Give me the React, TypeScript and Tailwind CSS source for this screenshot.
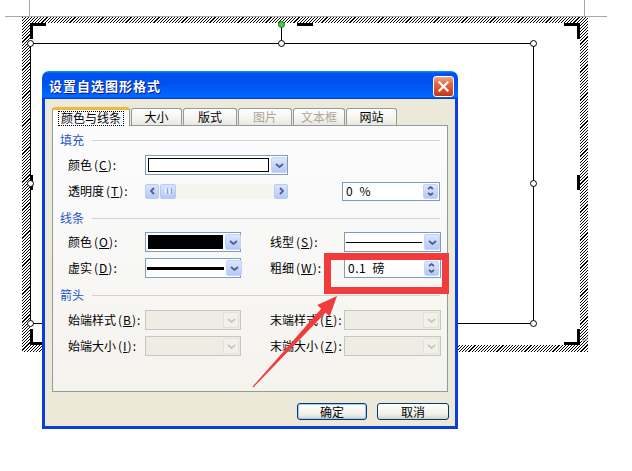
import React from 'react';

type Dir = 'up' | 'down' | 'left' | 'right';

function Chevron({ dir, color = '#4D6185', small }: { dir: Dir; color?: string; small?: boolean }) {
  if (dir === 'up' || dir === 'down') {
    const w = small ? 7 : 9;
    const h = small ? 4 : 5;
    const pts = dir === 'down' ? `1,1 ${w / 2},${h - 1} ${w - 1},1` : `1,${h - 1} ${w / 2},1 ${w - 1},${h - 1}`;
    return (
      <svg width={w} height={h} viewBox={`0 0 ${w} ${h}`}>
        <polyline points={pts} fill="none" stroke={color} strokeWidth={1.8} />
      </svg>
    );
  }
  const pts = dir === 'left' ? '4,1 1,4 4,7' : '1,1 4,4 1,7';
  return (
    <svg width={5} height={8} viewBox="0 0 5 8">
      <polyline points={pts} fill="none" stroke={color} strokeWidth={1.8} />
    </svg>
  );
}

const DropBtn = ({ disabled }: { disabled?: boolean }) => (
  <div
    className={`flex w-[16px] shrink-0 items-center justify-center rounded-[2px] border ${
      disabled
        ? 'border-[#E2E1D8] bg-[#F1F0EA]'
        : 'border-[#C3D3FD] bg-[linear-gradient(to_bottom,#DCE6FE,#B4C8F7)]'
    }`}
  >
    <Chevron dir="down" color={disabled ? '#C9C7BA' : '#4D6185'} />
  </div>
);

const Combo = ({ className, disabled, children }: { className: string; disabled?: boolean; children?: React.ReactNode }) => (
  <div
    className={`flex h-[20px] shrink-0 gap-[2px] border p-[1px] ${
      disabled ? 'border-[#C9C7BA] bg-[#EDECE5]' : 'border-[#7F9DB9] bg-white'
    } ${className}`}
  >
    <div className="flex flex-1 items-center">{children}</div>
    <DropBtn disabled={disabled} />
  </div>
);

const Spin = ({ className, children }: { className: string; children: React.ReactNode }) => (
  <div className={`flex h-[19px] shrink-0 border border-[#7F9DB9] bg-white p-[1px] ${className}`}>
    <div className="flex flex-1 items-center whitespace-pre pl-[2px] text-[12px] leading-none tracking-[0.5px]">{children}</div>
    <div className="flex w-[15px] flex-col items-center justify-center gap-[2px] rounded-[2px] border border-[#C3D3FD] bg-[linear-gradient(to_bottom,#DCE6FE,#B4C8F7)]">
      <Chevron dir="up" small />
      <Chevron dir="down" small />
    </div>
  </div>
);

const ScrollBtn = ({ dir }: { dir: Dir }) => (
  <div className="flex w-[14px] items-center justify-center rounded-[2px] border border-[#B8C9F3] bg-[linear-gradient(to_bottom,#D8E3FD,#B6CAF7)]">
    <Chevron dir={dir} />
  </div>
);

const Label = ({ text, k, className = '' }: { text: string; k: string; className?: string }) => (
  <span className={`shrink-0 text-[12px] leading-none text-black ${className}`}>
    {text}
    <span className="ml-[2px] tracking-[1px]">
      (<span className="underline">{k}</span>):
    </span>
  </span>
);

const Group = ({ title, className }: { title: string; className: string }) => (
  <div className={`flex h-[14px] items-center gap-[8px] pl-[7px] pr-[7px] ${className}`}>
    <span className="text-[12px] leading-none text-[#1E56C8]">{title}</span>
    <div className="h-px flex-1 bg-[#D4D3C8]" />
  </div>
);

const Handle = ({ className }: { className: string }) => (
  <div className={`absolute h-[7px] w-[7px] rounded-full border border-black bg-white ${className}`} />
);

const tabs = [
  { label: '颜色与线条', w: 'w-[78px]', active: true },
  { label: '大小', w: 'w-[51px]' },
  { label: '版式', w: 'w-[54px]' },
  { label: '图片', w: 'w-[54px]', disabled: true },
  { label: '文本框', w: 'w-[52px]', disabled: true },
  { label: '网站', w: 'w-[51px]' },
];

export default function App() {
  return (
    <div className="relative h-[471px] w-[632px] overflow-hidden bg-white font-['Noto_Sans_CJK_SC',sans-serif]">
      {/* page guides */}
      <div className="absolute left-[29px] top-0 h-[16px] w-px bg-[#A8A8A8]" />
      <div className="absolute left-[584px] top-0 h-[16px] w-px bg-[#A8A8A8]" />

      {/* hatched frame of the selected shape */}
      <div className="absolute left-[22px] top-[17px] h-[335px] w-[566px] bg-[repeating-linear-gradient(135deg,#000_0px,#000_0.8px,#fff_0.8px,#fff_2.2px)] px-[8px] pb-[7px] pt-[6px]">
        <div className="h-full w-full bg-white" />
      </div>
      <div className="absolute left-[5px] top-[16px] h-px w-[602px] bg-[#A8A8A8]" />

      {/* crop brackets */}
      <div className="absolute left-[30px] top-[23px] h-[16px] w-[16px] border-l-[3px] border-t-[3px] border-black" />
      <div className="absolute left-[564px] top-[23px] h-[16px] w-[16px] border-r-[3px] border-t-[3px] border-black" />
      <div className="absolute left-[30px] top-[329px] h-[16px] w-[16px] border-b-[3px] border-l-[3px] border-black" />
      <div className="absolute left-[564px] top-[329px] h-[16px] w-[16px] border-b-[3px] border-r-[3px] border-black" />
      <div className="absolute left-[297px] top-[23px] h-[3px] w-[16px] bg-black" />
      <div className="absolute left-[30px] top-[175px] h-[15px] w-[3px] bg-black" />
      <div className="absolute left-[577px] top-[175px] h-[15px] w-[3px] bg-black" />
      <svg className="absolute left-[581px] top-[336px]" width="7" height="7" viewBox="0 0 7 7">
        <path d="M6 0v4H1M3 2L1 4l2 2" fill="none" stroke="#9A9A9A" strokeWidth="1" />
      </svg>

      {/* the shape */}
      <div className="absolute left-[30px] top-[43px] h-[281px] w-[504px] border border-black" />
      <div className="absolute left-[281px] top-[24px] h-[19px] w-px bg-black" />
      <div className="absolute left-[278px] top-[21px] h-[7px] w-[7px] rounded-full border border-[#1B7A1B] bg-[#3DD33D]" />
      <Handle className="left-[27px] top-[40px]" />
      <Handle className="left-[278px] top-[40px]" />
      <Handle className="left-[530px] top-[40px]" />
      <Handle className="left-[530px] top-[180px]" />
      <Handle className="left-[530px] top-[320px]" />
      <Handle className="left-[27px] top-[320px]" />
      <Handle className="left-[27px] top-[180px]" />

      {/* dialog */}
      <div className="absolute left-[42px] top-[71px] flex h-[358px] w-[416px] flex-col overflow-hidden rounded-t-[7px]">
        <div className="flex h-[28px] shrink-0 items-center justify-between bg-[linear-gradient(to_bottom,#0997FF,#0053EE_8%,#0050EE_40%,#0066FF_88%,#0066FF_93%,#005BFF_95%,#003DD7_96%,#003DD7)] pl-[7px] pr-[4px]">
          <span className="text-[13px] font-bold leading-none tracking-[1px] text-white [text-shadow:1px_1px_#0A1A8A]">
            设置自选图形格式
          </span>
          <div className="mt-[2px] flex h-[21px] w-[21px] items-center justify-center rounded-[3px] border border-white bg-[linear-gradient(to_bottom,#F1A68A,#E26A45_35%,#CE4420_85%,#B8361A)]">
            <svg width="11" height="11" viewBox="0 0 11 11">
              <path d="M1.5 1.5l8 8M9.5 1.5l-8 8" stroke="#fff" strokeWidth="2.2" strokeLinecap="square" />
            </svg>
          </div>
        </div>

        <div className="flex flex-1 flex-col border-x-[3px] border-b-[3px] border-[#0A3ED8] bg-[#ECE9D8] pt-[8px]">
          {/* tabs */}
          <div className="flex items-end gap-px pl-[7px]">
            {tabs.map((t) =>
              t.active ? (
                <div
                  key={t.label}
                  className={`relative z-10 -mb-px flex h-[19px] items-center justify-center rounded-t-[3px] border border-b-0 border-[#919B9C] border-t-[3px] border-t-[#F5B53C] bg-[#FCFCFE] ${t.w}`}
                >
                  <span className="border border-dotted border-black px-[2px] pb-px text-[12px] leading-none">{t.label}</span>
                </div>
              ) : (
                <div
                  key={t.label}
                  className={`flex h-[17px] items-center justify-center rounded-t-[3px] border border-b-0 border-[#919B9C] bg-[linear-gradient(to_bottom,#FFFFFF,#F4F3EE_60%,#E8E7DF)] text-[12px] leading-none ${
                    t.disabled ? 'text-[#ACA899]' : 'text-black'
                  } ${t.w}`}
                >
                  {t.label}
                </div>
              )
            )}
          </div>

          {/* tab panel */}
          <div className="relative mx-[7px] flex h-[267px] flex-col border border-[#919B9C] bg-[linear-gradient(to_bottom,#FCFCFE,#F4F3EE)] pt-[7px]">
            <Group title="填充" className="" />

            <div className="mt-[8px] flex h-[20px] items-center pl-[15px]">
              <Label text="颜色" k="C" className="w-[77px]" />
              <Combo className="w-[143px]">
                <div className="ml-px h-[14px] w-[121px] border border-black bg-white" />
              </Combo>
            </div>

            <div className="mt-[6px] flex h-[20px] items-center pl-[15px]">
              <Label text="透明度" k="T" className="w-[77px]" />
              <div className="flex h-[15px] w-[143px] shrink-0 bg-[#F5F4EF]">
                <ScrollBtn dir="left" />
                <div className="ml-[1px] flex w-[16px] items-center justify-center gap-px rounded-[2px] border border-[#B8C9F3] bg-[linear-gradient(to_bottom,#D8E3FD,#B6CAF7)]">
                  <div className="h-[6px] w-px bg-[#EEF3FE]" />
                  <div className="h-[6px] w-px bg-[#8DA7E6]" />
                  <div className="h-[6px] w-px bg-[#EEF3FE]" />
                  <div className="h-[6px] w-px bg-[#8DA7E6]" />
                </div>
                <div className="flex-1" />
                <ScrollBtn dir="right" />
              </div>
              <div className="w-[54px] shrink-0" />
              <Spin className="w-[98px]">{'0  %'}</Spin>
            </div>

            <Group title="线条" className="mt-[10px]" />

            <div className="mt-[7px] flex h-[20px] items-center pl-[15px]">
              <Label text="颜色" k="O" className="w-[77px]" />
              <Combo className="w-[96px]">
                <div className="ml-px h-[14px] w-[75px] bg-black" />
              </Combo>
              <div className="w-[29px] shrink-0" />
              <Label text="线型" k="S" className="w-[74px]" />
              <Combo className="w-[97px]">
                <div className="h-px w-[76px] bg-black" />
              </Combo>
            </div>

            <div className="mt-[6px] flex h-[20px] items-center pl-[15px]">
              <Label text="虚实" k="D" className="w-[77px]" />
              <Combo className="w-[96px]">
                <div className="h-[3px] w-[77px] bg-black" />
              </Combo>
              <div className="w-[29px] shrink-0" />
              <Label text="粗细" k="W" className="w-[74px]" />
              <Spin className="w-[97px]">{'0.1  磅'}</Spin>
            </div>

            <Group title="箭头" className="mt-[10px]" />

            <div className="mt-[8px] flex h-[20px] items-center pl-[15px]">
              <Label text="始端样式" k="B" className="w-[77px]" />
              <Combo className="w-[96px]" disabled />
              <div className="w-[29px] shrink-0" />
              <Label text="末端样式" k="E" className="w-[74px]" />
              <Combo className="w-[97px]" disabled />
            </div>

            <div className="mt-[6px] flex h-[20px] items-center pl-[15px]">
              <Label text="始端大小" k="I" className="w-[77px]" />
              <Combo className="w-[96px]" disabled />
              <div className="w-[29px] shrink-0" />
              <Label text="末端大小" k="Z" className="w-[74px]" />
              <Combo className="w-[97px]" disabled />
            </div>
          </div>

          {/* buttons */}
          <div className="mt-[11px] flex justify-end gap-[10px] pr-[6px]">
            <button className="flex h-[17px] w-[70px] items-center justify-center rounded-[3px] border border-[#003C74] bg-[linear-gradient(to_bottom,#FFFFFF,#F0F0EA_70%,#D6D0C5)] text-[12px] leading-none shadow-[inset_0_0_0_1px_#A9C4EE]">
              确定
            </button>
            <button className="flex h-[17px] w-[72px] items-center justify-center rounded-[3px] border border-[#003C74] bg-[linear-gradient(to_bottom,#FFFFFF,#F0F0EA_70%,#D6D0C5)] text-[12px] leading-none">
              取消
            </button>
          </div>
        </div>
      </div>

      {/* annotation */}
      <div className="absolute left-[324px] top-[253px] h-[41px] w-[125px] border-[7px] border-[#F03C3C]" />
      <svg className="pointer-events-none absolute left-0 top-0" width="632" height="471" viewBox="0 0 632 471">
        <polygon
          points="337,296 329.7,316.5 325.6,312.7 253.4,387.4 252.6,386.6 321.2,308.7 317.2,304.9"
          fill="#F03C3C"
        />
      </svg>
    </div>
  );
}
